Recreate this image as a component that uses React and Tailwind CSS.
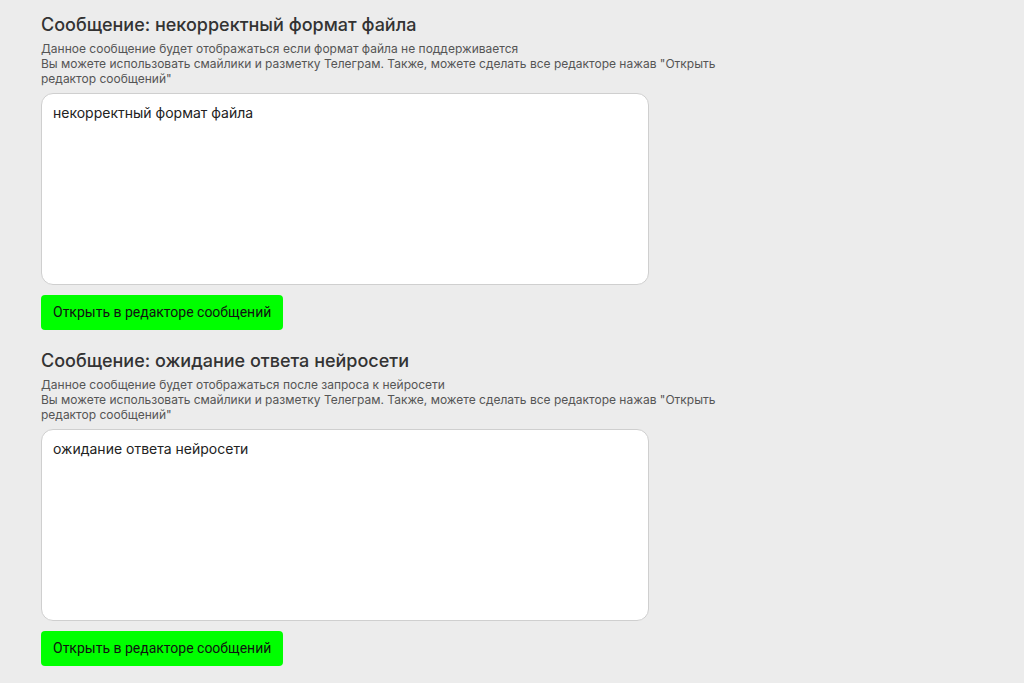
import { useState } from 'react';

const sections = [
  {
    title: 'Сообщение: некорректный формат файла',
    hint: 'Данное сообщение будет отображаться если формат файла не поддерживается',
    value: 'некорректный формат файла',
  },
  {
    title: 'Сообщение: ожидание ответа нейросети',
    hint: 'Данное сообщение будет отображаться после запроса к нейросети',
    value: 'ожидание ответа нейросети',
  },
];

const MessageField = ({ title, hint, initial }) => {
  const [text, setText] = useState(initial);
  return (
    <div className="flex flex-col">
      <h2 className="text-[18px] leading-[22px] font-medium text-[#333333]">{title}</h2>
      <p className="mt-[5px] w-[690px] text-[12px] leading-[15px] text-[#555555]">
        {hint}
        <br />
        Вы можете использовать смайлики и разметку Телеграм. Также, можете сделать все редакторе нажав "Открыть редактор сообщений"
      </p>
      <textarea
        className="mt-[7px] w-[608px] h-[192px] resize-none rounded-[12px] border border-[#cfcfcf] bg-white px-[11px] py-[9px] text-[14px] leading-[20px] text-[#222222] outline-none"
        value={text}
        onChange={e => setText(e.target.value)}
      />
      <div className="mt-[10px]">
        <button className="h-[35px] px-[12px] rounded-[4px] bg-[#00ff00] text-[14px] text-[#111111] font-['Roboto',sans-serif]">
          Открыть в редакторе сообщений
        </button>
      </div>
    </div>
  );
}

export default function App() {
  return (
    <div className="min-h-[683px] bg-[#ececec] font-['Inter',sans-serif]">
      <div className="flex flex-col gap-[20px] pl-[41px] pt-[14px]">
        {sections.map(s => (
          <MessageField key={s.title} title={s.title} hint={s.hint} initial={s.value} />
        ))}
      </div>
    </div>
  );
}
